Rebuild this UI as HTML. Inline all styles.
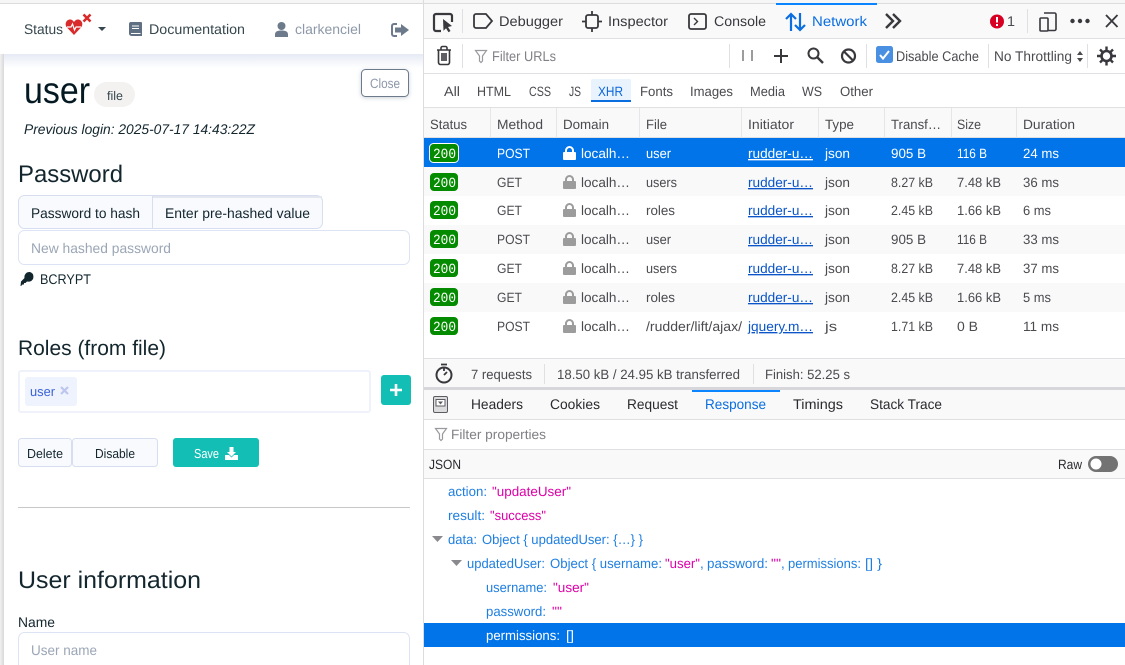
<!DOCTYPE html>
<html><head><meta charset="utf-8"><title>user</title>
<style>
html,body{margin:0;padding:0;width:1125px;height:665px;overflow:hidden;background:#fff}
svg{display:block}
text{font-family:"Liberation Sans",sans-serif;font-size:13.5px;fill:#38383d;white-space:pre;text-rendering:geometricPrecision}
.l{font-size:14px;fill:#36474e}
.b{fill:#0a66d8}
.m{fill:#4a4a4f}
.k{fill:#1f7fe0}
.s{fill:#dd00a9}
.w{fill:#fff}
.u{text-decoration:underline;fill:#0a55c8}
.g{fill:#808086}
.st{font-family:"Liberation Mono",monospace;font-size:14px;fill:#fff}
</style></head><body>
<svg xmlns="http://www.w3.org/2000/svg" width="1125" height="665" viewBox="0 0 1125 665">
<defs>
<linearGradient id="sh" x1="0" y1="0" x2="0" y2="1"><stop offset="0" stop-color="#e6eaf5"/><stop offset="1" stop-color="#fff"/></linearGradient>
<linearGradient id="sl" x1="0" y1="0" x2="1" y2="0"><stop offset="0" stop-color="#f2f2f2"/><stop offset="1" stop-color="#d8d8d8"/></linearGradient>
<filter id="cs" x="-20%" y="-20%" width="140%" height="150%"><feDropShadow dx="0" dy="1" stdDeviation="2" flood-color="#6c7a8c" flood-opacity=".35"/></filter>
<path id="lock" d="M2 6V4.500a4.500 4.500 0 0 1 9 0V6h1a1 1 0 0 1 1 1v6a1 1 0 0 1-1 1H1a1 1 0 0 1-1-1V7a1 1 0 0 1 1-1zM4 6h5V4.500a2.500 2.500 0 0 0-5 0z"/>
<path id="fn" d="M.5.5h11L7.500 6v5L6 12.500 4.500 11V6z" fill="none" stroke="#9a9a9e" stroke-width="1.200"/>
</defs>

<!-- LEFT PAGE -->
<rect x="0" y="0" width="424" height="665" fill="#fff"/>
<rect x="0" y="0" width="424" height="3" fill="#f6f6f6"/>
<rect x="0" y="3" width="424" height="1" fill="#dcdcdc"/>
<rect x="0" y="54" width="4" height="611" fill="url(#sl)"/>
<rect x="4" y="54" width="419" height="14" fill="url(#sh)"/>
<rect x="423" y="0" width="1" height="665" fill="#dcdcde"/>

<text class="l" x="24" y="34" textLength="39" lengthAdjust="spacingAndGlyphs">Status</text>
<path d="M74 35l-7-7.500c-3-3.500-.5-8 3-8 2 0 3 1 4 2.500 1-1.500 2-2.500 4-2.500 3.500 0 6 4.500 3 8z" fill="#d92b2b"/>
<path d="M67 27h4l1.500-3 2 6 1.500-3h5" fill="none" stroke="#fff" stroke-width="1.200"/>
<path d="M83.500 14.500l7 7m0-7l-7 7" stroke="#d92b2b" stroke-width="2.600" fill="none"/>
<path d="M98 27h8l-4 4z" fill="#36474e"/>
<path d="M131 22h10a1 1 0 0 1 1 1v13h-10.500a2.500 2.500 0 0 1-2.500-2.500V24a2 2 0 0 1 2-2z" fill="#5f7083"/>
<path d="M131 33.500h9.500M132 26h7M132 28.500h7" stroke="#fff" stroke-width="1" fill="none"/>
<text class="l" x="149" y="34" textLength="96" lengthAdjust="spacingAndGlyphs">Documentation</text>
<circle cx="281.500" cy="26" r="4" fill="#6c7a8c"/><path d="M275 37v-2.500c0-3 2.500-4 6.500-4s6.500 1 6.500 4V37z" fill="#6c7a8c"/>
<text class="l" style="fill:#8d98a8" x="295" y="34" textLength="66" lengthAdjust="spacingAndGlyphs">clarkenciel</text>
<path d="M401 24l8 6-8 6v-3.500h-6v-5h6z" fill="#6c7a8c"/><path d="M397 24h-3a2 2 0 0 0-2 2v8a2 2 0 0 0 2 2h3" fill="none" stroke="#6c7a8c" stroke-width="2"/>

<text x="24" y="103" style="font-size:37px;fill:#041922" textLength="66" lengthAdjust="spacingAndGlyphs">user</text>
<rect x="94" y="82" width="41" height="25" rx="12.500" fill="#f3f2f1"/>
<text x="107" y="100" style="font-size:12.500px;fill:#36474e" textLength="16" lengthAdjust="spacingAndGlyphs">file</text>
<text x="24" y="134" style="font-size:14px;font-style:italic;fill:#13262e" textLength="231" lengthAdjust="spacingAndGlyphs">Previous login: 2025-07-17 14:43:22Z</text>
<rect x="361.500" y="69.500" width="47" height="27" rx="4" fill="#fff" stroke="#6c7a8c" filter="url(#cs)"/>
<text x="370" y="88" style="font-size:13.500px;fill:#8d98a8" textLength="30" lengthAdjust="spacingAndGlyphs">Close</text>

<text x="18" y="182" style="font-size:24px;fill:#13262e" textLength="105" lengthAdjust="spacingAndGlyphs">Password</text>
<rect x="18.500" y="195.500" width="304" height="33" rx="6" fill="#f8fafe" stroke="#d6deef"/>
<rect x="152" y="196" width="1" height="32" fill="#d6deef"/>
<rect x="153" y="196" width="169" height="2" fill="#e4e7ef"/>
<text class="l" style="fill:#13262e" x="31" y="218" textLength="109" lengthAdjust="spacingAndGlyphs">Password to hash</text>
<text class="l" style="fill:#13262e" x="165" y="218" textLength="145" lengthAdjust="spacingAndGlyphs">Enter pre-hashed value</text>
<rect x="18.500" y="230.500" width="391" height="34" rx="6" fill="#fff" stroke="#dbe3f4"/>
<text class="l" style="fill:#9ba6b6" x="31" y="253" textLength="140" lengthAdjust="spacingAndGlyphs">New hashed password</text>
<path d="M30 272a5 5 0 0 1 0 9.500c-1 .2-2 .2-3 0l-1.500 1.500h-1.500v1.500h-1.500l-1.500 1.500h-.5l.5-4.500 3.500-3.500a5 5 0 0 1 5.500-6z" fill="#13262e"/>
<text class="l" style="fill:#13262e" x="40" y="284" textLength="51" lengthAdjust="spacingAndGlyphs">BCRYPT</text>

<text x="18" y="355" style="font-size:21px;fill:#13262e" textLength="148" lengthAdjust="spacingAndGlyphs">Roles (from file)</text>
<rect x="19" y="371" width="351" height="41" rx="2" fill="#fff" stroke="#eff2fb" stroke-width="2"/>
<rect x="25" y="377" width="52" height="29" rx="3" fill="#eff3fd"/>
<text x="30" y="396" style="font-size:13px;fill:#3a62d6" textLength="25" lengthAdjust="spacingAndGlyphs">user</text>
<path d="M61 387l7 7m0-7l-7 7" stroke="#bcc6ee" stroke-width="2.200" fill="none"/>
<rect x="381" y="375" width="30" height="30" rx="3" fill="#13bfb5"/>
<path d="M396 384v12m-6-6h12" stroke="#fff" stroke-width="2.600" fill="none"/>

<rect x="18.500" y="438.500" width="53" height="28" rx="3" fill="#f8fafe" stroke="#d6deef"/>
<rect x="72.500" y="438.500" width="85" height="28" rx="3" fill="#f8fafe" stroke="#d6deef"/>
<text x="27" y="458" style="font-size:13px;fill:#13262e" textLength="36" lengthAdjust="spacingAndGlyphs">Delete</text>
<text x="95" y="458" style="font-size:13px;fill:#13262e" textLength="40" lengthAdjust="spacingAndGlyphs">Disable</text>
<rect x="173" y="438" width="86" height="29" rx="3" fill="#13bfb5"/>
<text x="194" y="458" class="w" style="font-size:13px" textLength="25" lengthAdjust="spacingAndGlyphs">Save</text>
<path d="M229.500 447h4v5h2.500l-4.500 4.500-4.500-4.500h2.500z" fill="#fff"/><path d="M225 455h4l2.500 2.500 2.500-2.500h4v5h-13z" fill="#fff"/>
<rect x="18" y="507" width="392" height="1" fill="#c8c8c8"/>
<text x="18" y="588" style="font-size:24px;fill:#13262e" textLength="183" lengthAdjust="spacingAndGlyphs">User information</text>
<text class="l" style="fill:#13262e" x="18" y="627" textLength="37" lengthAdjust="spacingAndGlyphs">Name</text>
<rect x="18.500" y="632.500" width="391" height="40" rx="6" fill="#fff" stroke="#dbe3f4"/>
<text class="l" style="fill:#9ba6b6" x="31" y="655" textLength="66" lengthAdjust="spacingAndGlyphs">User name</text>

<!-- DEVTOOLS -->
<rect x="424" y="0" width="701" height="665" fill="#fff"/>
<rect x="424" y="0" width="701" height="3" fill="#f6f6f6"/>
<rect x="424" y="3" width="701" height="1" fill="#dcdcde"/>
<rect x="424" y="4" width="701" height="34" fill="#f9f9fa"/>
<rect x="424" y="38" width="701" height="1" fill="#e0e0e2"/>
<rect x="424" y="73" width="701" height="1" fill="#e0e0e2"/>
<rect x="424" y="107" width="701" height="1" fill="#e0e0e2"/>
<rect x="776" y="3" width="101" height="2" fill="#0a84ff"/>
<rect x="462" y="9" width="1" height="24" fill="#e0e0e2"/>
<rect x="1027" y="9" width="1" height="24" fill="#e0e0e2"/>

<!-- toolbar icons -->
<path d="M441 31h-5a2 2 0 0 1-2-2V16a2 2 0 0 1 2-2h14a2 2 0 0 1 2 2v6" fill="none" stroke="#38383d" stroke-width="2.200"/>
<path d="M443 19l9 7-4 1 2.500 4-2 1.200-2.500-4-2.500 2.500z" fill="#38383d"/>
<path d="M476 14h10l6 7-6 7h-10a2 2 0 0 1-2-2V16a2 2 0 0 1 2-2z" fill="none" stroke="#38383d" stroke-width="1.800"/>
<text x="499" y="26" class="l" style="fill:#38383d" textLength="64" lengthAdjust="spacingAndGlyphs">Debugger</text>
<rect x="586" y="15" width="12" height="13" rx="2" fill="none" stroke="#38383d" stroke-width="1.800"/>
<path d="M592 11v4M592 28v4M582 21.500h4M598 21.500h4" stroke="#38383d" stroke-width="1.800"/>
<text x="608" y="26" class="l" style="fill:#38383d" textLength="60" lengthAdjust="spacingAndGlyphs">Inspector</text>
<rect x="689" y="14" width="17" height="15" rx="2" fill="none" stroke="#38383d" stroke-width="1.800"/>
<path d="M694 18l3.500 3.500L694 25" fill="none" stroke="#38383d" stroke-width="1.400"/>
<text x="714" y="26" class="l" style="fill:#38383d" textLength="52" lengthAdjust="spacingAndGlyphs">Console</text>
<path d="M791 31V14m-5 5l5-5 5 5M800 13v17m-5-5l5 5 5-5" fill="none" stroke="#0a6ee0" stroke-width="2.200"/>
<text x="812" y="26" class="l" style="fill:#0a6ee0" textLength="55" lengthAdjust="spacingAndGlyphs">Network</text>
<path d="M886 14l7 7-7 7M893 14l7 7-7 7" fill="none" stroke="#38383d" stroke-width="2.400"/>
<circle cx="997" cy="21.500" r="7" fill="#d70022"/><path d="M997 17v5.500M997 24v2" stroke="#fff" stroke-width="2"/>
<text x="1007" y="26" class="l" style="fill:#4a4a4f" textLength="8" lengthAdjust="spacingAndGlyphs">1</text>
<rect x="1040" y="18" width="8" height="13" rx="1" fill="none" stroke="#38383d" stroke-width="1.600"/>
<path d="M1044 13h10.500a1.500 1.500 0 0 1 1.500 1.500V29a1.500 1.500 0 0 1-1.500 1.500H1048" fill="none" stroke="#38383d" stroke-width="1.600"/>
<circle cx="1072.500" cy="21" r="2.200" fill="#38383d"/><circle cx="1080" cy="21" r="2.200" fill="#38383d"/><circle cx="1087.500" cy="21" r="2.200" fill="#38383d"/>
<path d="M1106 15l11.500 12m0-12L1106 27" stroke="#38383d" stroke-width="1.800" fill="none"/>

<!-- row 2 -->
<rect x="462" y="44" width="1" height="24" fill="#e0e0e2"/>
<rect x="729" y="44" width="1" height="24" fill="#e0e0e2"/>
<rect x="866" y="44" width="1" height="24" fill="#e0e0e2"/>
<rect x="988" y="44" width="1" height="24" fill="#e0e0e2"/>
<rect x="1087" y="44" width="1" height="24" fill="#e0e0e2"/>
<path d="M437 50h14M441 50v-2a1.500 1.500 0 0 1 1.500-1.500h3a1.500 1.500 0 0 1 1.500 1.500v2M438.500 50v12.500a2 2 0 0 0 2 2h7a2 2 0 0 0 2-2V50M442 53v8M444 53v8M446 53v8" fill="none" stroke="#38383d" stroke-width="1.600"/>
<use href="#fn" x="475" y="50"/>
<text x="492" y="61" class="g" style="font-size:14px" textLength="64" lengthAdjust="spacingAndGlyphs">Filter URLs</text>
<path d="M743 50v11M752 50v11" stroke="#38383d" stroke-width="1"/>
<path d="M781 49v14M774 56h14" stroke="#38383d" stroke-width="2"/>
<circle cx="813.500" cy="53.500" r="5" fill="none" stroke="#38383d" stroke-width="2"/><path d="M817 57l6 6" stroke="#38383d" stroke-width="2.400"/>
<circle cx="848.500" cy="56" r="6.500" fill="none" stroke="#38383d" stroke-width="2.200"/><path d="M844 51.500l9 9" stroke="#38383d" stroke-width="2.200"/>
<rect x="876" y="46" width="17" height="17" rx="2.500" fill="#4a90e2"/>
<path d="M880 55l3 3.500 6-7.500" fill="none" stroke="#fff" stroke-width="2"/>
<text class="m" x="896" y="61" style="font-size:14px" textLength="83" lengthAdjust="spacingAndGlyphs">Disable Cache</text>
<text class="m" x="994" y="61" style="font-size:14px" textLength="78" lengthAdjust="spacingAndGlyphs">No Throttling</text>
<path d="M1077 55l3-4 3 4zM1077 58l3 4 3-4z" fill="#4a4a4f"/>
<circle cx="1106.500" cy="56" r="5" fill="none" stroke="#38383d" stroke-width="2.600"/>
<path d="M1106.500 46.500v4M1106.500 61.500v4M1097 56h4M1112 56h4M1100 49.500l3 3M1110 59.500l3 3M1113 49.500l-3 3M1103 59.500l-3 3" stroke="#38383d" stroke-width="2.400"/>

<!-- filter row -->
<rect x="591" y="79" width="40" height="22" rx="2" fill="#e9f3fe"/>
<rect x="591" y="100" width="40" height="2" fill="#0a6ee0"/>
<text class="m" x="444" y="96" textLength="16" lengthAdjust="spacingAndGlyphs">All</text>
<text class="m" x="477" y="96" textLength="34" lengthAdjust="spacingAndGlyphs">HTML</text>
<text class="m" x="529" y="96" textLength="22" lengthAdjust="spacingAndGlyphs">CSS</text>
<text class="m" x="569" y="96" textLength="12" lengthAdjust="spacingAndGlyphs">JS</text>
<text class="b" x="598" y="96" textLength="25" lengthAdjust="spacingAndGlyphs">XHR</text>
<text class="m" x="640" y="96" textLength="33" lengthAdjust="spacingAndGlyphs">Fonts</text>
<text class="m" x="690" y="96" textLength="43" lengthAdjust="spacingAndGlyphs">Images</text>
<text class="m" x="750" y="96" textLength="35" lengthAdjust="spacingAndGlyphs">Media</text>
<text class="m" x="802" y="96" textLength="20" lengthAdjust="spacingAndGlyphs">WS</text>
<text class="m" x="840" y="96" textLength="33" lengthAdjust="spacingAndGlyphs">Other</text>

<!-- table header -->
<rect x="424" y="108" width="701" height="30" fill="#f9f9fa"/>
<rect x="424" y="137" width="701" height="1" fill="#e0e0e2"/>
<g fill="#e6e6e8">
<rect x="490" y="108" width="1" height="30"/><rect x="556" y="108" width="1" height="30"/><rect x="639" y="108" width="1" height="30"/><rect x="741" y="108" width="1" height="30"/><rect x="818" y="108" width="1" height="30"/><rect x="884" y="108" width="1" height="30"/><rect x="951" y="108" width="1" height="30"/><rect x="1016" y="108" width="1" height="30"/>
</g>
<text class="m" x="430" y="129" textLength="37" lengthAdjust="spacingAndGlyphs">Status</text>
<text class="m" x="497" y="129" textLength="46" lengthAdjust="spacingAndGlyphs">Method</text>
<text class="m" x="563" y="129" textLength="46" lengthAdjust="spacingAndGlyphs">Domain</text>
<text class="m" x="646" y="129" textLength="21" lengthAdjust="spacingAndGlyphs">File</text>
<text class="m" x="748" y="129" textLength="46" lengthAdjust="spacingAndGlyphs">Initiator</text>
<text class="m" x="825" y="129" textLength="29" lengthAdjust="spacingAndGlyphs">Type</text>
<text class="m" x="891" y="129" textLength="50" lengthAdjust="spacingAndGlyphs">Transf…</text>
<text class="m" x="957" y="129" textLength="24" lengthAdjust="spacingAndGlyphs">Size</text>
<text class="m" x="1023" y="129" textLength="52" lengthAdjust="spacingAndGlyphs">Duration</text>

<!-- rows -->
<rect x="424" y="138" width="701" height="29" fill="#0074e8"/>
<rect x="424" y="167" width="701" height="29" fill="#f9f9fa"/>
<rect x="424" y="225" width="701" height="29" fill="#f9f9fa"/>
<rect x="424" y="283" width="701" height="29" fill="#f9f9fa"/>

<!-- row 1 -->
<rect x="429.500" y="143.500" width="29" height="19" rx="4" fill="#058b00" stroke="#fff"/>
<text class="st" x="433" y="158" textLength="23" lengthAdjust="spacingAndGlyphs">200</text>
<text class="w" x="497" y="158" textLength="33" lengthAdjust="spacingAndGlyphs">POST</text>
<use href="#lock" x="563" y="146" fill="#fff"/>
<text class="w" x="581" y="158" textLength="49" lengthAdjust="spacingAndGlyphs">localh…</text>
<text class="w" x="646" y="158" textLength="25" lengthAdjust="spacingAndGlyphs">user</text>
<text class="w" style="text-decoration:underline" x="748" y="158" textLength="65" lengthAdjust="spacingAndGlyphs">rudder-u…</text>
<text class="w" x="825" y="158" textLength="25" lengthAdjust="spacingAndGlyphs">json</text>
<text class="w" x="891" y="158" textLength="35" lengthAdjust="spacingAndGlyphs">905 B</text>
<text class="w" x="957" y="158" textLength="30" lengthAdjust="spacingAndGlyphs">116 B</text>
<text class="w" x="1023" y="158" textLength="36" lengthAdjust="spacingAndGlyphs">24 ms</text>

<!-- row 2 -->
<rect x="430" y="173" width="28" height="18" rx="4" fill="#058b00"/>
<text class="st" x="433" y="187" textLength="23" lengthAdjust="spacingAndGlyphs">200</text>
<text class="m" x="497" y="187" textLength="25" lengthAdjust="spacingAndGlyphs">GET</text>
<use href="#lock" x="563" y="175" fill="#9c9c9c"/>
<text class="m" x="581" y="187" textLength="49" lengthAdjust="spacingAndGlyphs">localh…</text>
<text class="m" x="646" y="187" textLength="31" lengthAdjust="spacingAndGlyphs">users</text>
<text class="u" x="748" y="187" textLength="65" lengthAdjust="spacingAndGlyphs">rudder-u…</text>
<text class="m" x="825" y="187" textLength="25" lengthAdjust="spacingAndGlyphs">json</text>
<text class="m" x="891" y="187" textLength="42" lengthAdjust="spacingAndGlyphs">8.27 kB</text>
<text class="m" x="957" y="187" textLength="44" lengthAdjust="spacingAndGlyphs">7.48 kB</text>
<text class="m" x="1023" y="187" textLength="36" lengthAdjust="spacingAndGlyphs">36 ms</text>

<!-- row 3 -->
<rect x="430" y="201" width="28" height="18" rx="4" fill="#058b00"/>
<text class="st" x="433" y="215" textLength="23" lengthAdjust="spacingAndGlyphs">200</text>
<text class="m" x="497" y="215" textLength="25" lengthAdjust="spacingAndGlyphs">GET</text>
<use href="#lock" x="563" y="203" fill="#9c9c9c"/>
<text class="m" x="581" y="215" textLength="49" lengthAdjust="spacingAndGlyphs">localh…</text>
<text class="m" x="646" y="215" textLength="29" lengthAdjust="spacingAndGlyphs">roles</text>
<text class="u" x="748" y="215" textLength="65" lengthAdjust="spacingAndGlyphs">rudder-u…</text>
<text class="m" x="825" y="215" textLength="25" lengthAdjust="spacingAndGlyphs">json</text>
<text class="m" x="891" y="215" textLength="42" lengthAdjust="spacingAndGlyphs">2.45 kB</text>
<text class="m" x="957" y="215" textLength="44" lengthAdjust="spacingAndGlyphs">1.66 kB</text>
<text class="m" x="1023" y="215" textLength="28" lengthAdjust="spacingAndGlyphs">6 ms</text>

<!-- row 4 -->
<rect x="430" y="230" width="28" height="18" rx="4" fill="#058b00"/>
<text class="st" x="433" y="244" textLength="23" lengthAdjust="spacingAndGlyphs">200</text>
<text class="m" x="497" y="244" textLength="33" lengthAdjust="spacingAndGlyphs">POST</text>
<use href="#lock" x="563" y="232" fill="#9c9c9c"/>
<text class="m" x="581" y="244" textLength="49" lengthAdjust="spacingAndGlyphs">localh…</text>
<text class="m" x="646" y="244" textLength="25" lengthAdjust="spacingAndGlyphs">user</text>
<text class="u" x="748" y="244" textLength="65" lengthAdjust="spacingAndGlyphs">rudder-u…</text>
<text class="m" x="825" y="244" textLength="25" lengthAdjust="spacingAndGlyphs">json</text>
<text class="m" x="891" y="244" textLength="35" lengthAdjust="spacingAndGlyphs">905 B</text>
<text class="m" x="957" y="244" textLength="30" lengthAdjust="spacingAndGlyphs">116 B</text>
<text class="m" x="1023" y="244" textLength="36" lengthAdjust="spacingAndGlyphs">33 ms</text>

<!-- row 5 -->
<rect x="430" y="259" width="28" height="18" rx="4" fill="#058b00"/>
<text class="st" x="433" y="273" textLength="23" lengthAdjust="spacingAndGlyphs">200</text>
<text class="m" x="497" y="273" textLength="25" lengthAdjust="spacingAndGlyphs">GET</text>
<use href="#lock" x="563" y="261" fill="#9c9c9c"/>
<text class="m" x="581" y="273" textLength="49" lengthAdjust="spacingAndGlyphs">localh…</text>
<text class="m" x="646" y="273" textLength="31" lengthAdjust="spacingAndGlyphs">users</text>
<text class="u" x="748" y="273" textLength="65" lengthAdjust="spacingAndGlyphs">rudder-u…</text>
<text class="m" x="825" y="273" textLength="25" lengthAdjust="spacingAndGlyphs">json</text>
<text class="m" x="891" y="273" textLength="42" lengthAdjust="spacingAndGlyphs">8.27 kB</text>
<text class="m" x="957" y="273" textLength="44" lengthAdjust="spacingAndGlyphs">7.48 kB</text>
<text class="m" x="1023" y="273" textLength="36" lengthAdjust="spacingAndGlyphs">37 ms</text>

<!-- row 6 -->
<rect x="430" y="288" width="28" height="18" rx="4" fill="#058b00"/>
<text class="st" x="433" y="302" textLength="23" lengthAdjust="spacingAndGlyphs">200</text>
<text class="m" x="497" y="302" textLength="25" lengthAdjust="spacingAndGlyphs">GET</text>
<use href="#lock" x="563" y="290" fill="#9c9c9c"/>
<text class="m" x="581" y="302" textLength="49" lengthAdjust="spacingAndGlyphs">localh…</text>
<text class="m" x="646" y="302" textLength="29" lengthAdjust="spacingAndGlyphs">roles</text>
<text class="u" x="748" y="302" textLength="65" lengthAdjust="spacingAndGlyphs">rudder-u…</text>
<text class="m" x="825" y="302" textLength="25" lengthAdjust="spacingAndGlyphs">json</text>
<text class="m" x="891" y="302" textLength="42" lengthAdjust="spacingAndGlyphs">2.45 kB</text>
<text class="m" x="957" y="302" textLength="44" lengthAdjust="spacingAndGlyphs">1.66 kB</text>
<text class="m" x="1023" y="302" textLength="28" lengthAdjust="spacingAndGlyphs">5 ms</text>

<!-- row 7 -->
<rect x="430" y="317" width="28" height="18" rx="4" fill="#058b00"/>
<text class="st" x="433" y="331" textLength="23" lengthAdjust="spacingAndGlyphs">200</text>
<text class="m" x="497" y="331" textLength="33" lengthAdjust="spacingAndGlyphs">POST</text>
<use href="#lock" x="563" y="319" fill="#9c9c9c"/>
<text class="m" x="581" y="331" textLength="49" lengthAdjust="spacingAndGlyphs">localh…</text>
<text class="m" x="646" y="331" textLength="96" lengthAdjust="spacingAndGlyphs">/rudder/lift/ajax/</text>
<text class="u" x="748" y="331" textLength="65" lengthAdjust="spacingAndGlyphs">jquery.m…</text>
<text class="m" x="825" y="331" textLength="12" lengthAdjust="spacingAndGlyphs">js</text>
<text class="m" x="891" y="331" textLength="42" lengthAdjust="spacingAndGlyphs">1.71 kB</text>
<text class="m" x="957" y="331" textLength="21" lengthAdjust="spacingAndGlyphs">0 B</text>
<text class="m" x="1023" y="331" textLength="36" lengthAdjust="spacingAndGlyphs">11 ms</text>

<!-- status bar -->
<rect x="424" y="358" width="701" height="1" fill="#e0e0e2"/>
<rect x="424" y="359" width="701" height="28" fill="#f9f9fa"/>
<circle cx="444" cy="375" r="7.500" fill="none" stroke="#38383d" stroke-width="2"/>
<path d="M441 364.500h6M444 371v-4M444 375l3-3" stroke="#38383d" stroke-width="1.800" fill="none"/>
<text class="m" x="471" y="379" textLength="61" lengthAdjust="spacingAndGlyphs">7 requests</text>
<rect x="544" y="364" width="1" height="20" fill="#e0e0e2"/>
<text class="m" x="557" y="379" textLength="183" lengthAdjust="spacingAndGlyphs">18.50 kB / 24.95 kB transferred</text>
<rect x="753" y="364" width="1" height="20" fill="#e0e0e2"/>
<text class="m" x="765" y="379" textLength="85" lengthAdjust="spacingAndGlyphs">Finish: 52.25 s</text>

<!-- detail tabs -->
<rect x="424" y="387" width="701" height="3" fill="#d7d7db"/>
<rect x="424" y="390" width="701" height="29" fill="#f9f9fa"/>
<rect x="424" y="419" width="701" height="1" fill="#e0e0e2"/>
<rect x="692" y="390" width="88" height="2" fill="#0a84ff"/>
<rect x="433.500" y="396.500" width="14" height="16" rx="1.500" fill="#dcdcde" stroke="#5c5c60"/>
<path d="M436 399.500h9v6.500h-9z" fill="#fff" stroke="#5c5c60"/><path d="M438 401.500h5l-2.500 3z" fill="#5c5c60"/>
<text x="471" y="409" style="font-size:14px;fill:#2a2a2e" textLength="52" lengthAdjust="spacingAndGlyphs">Headers</text>
<text x="550" y="409" style="font-size:14px;fill:#2a2a2e" textLength="50" lengthAdjust="spacingAndGlyphs">Cookies</text>
<text x="627" y="409" style="font-size:14px;fill:#2a2a2e" textLength="51" lengthAdjust="spacingAndGlyphs">Request</text>
<text x="705" y="409" style="font-size:14px;fill:#0a6ee0" textLength="61" lengthAdjust="spacingAndGlyphs">Response</text>
<text x="793" y="409" style="font-size:14px;fill:#2a2a2e" textLength="50" lengthAdjust="spacingAndGlyphs">Timings</text>
<text x="870" y="409" style="font-size:14px;fill:#2a2a2e" textLength="72" lengthAdjust="spacingAndGlyphs">Stack Trace</text>

<!-- filter properties -->
<use href="#fn" x="435" y="428"/>
<text class="g" x="451" y="439" textLength="95" lengthAdjust="spacingAndGlyphs">Filter properties</text>
<rect x="424" y="449" width="701" height="1" fill="#e0e0e2"/>
<rect x="424" y="450" width="701" height="28" fill="#f9f9fa"/>
<rect x="424" y="478" width="701" height="1" fill="#e0e0e2"/>
<text x="429" y="469" style="fill:#2a2a2e" textLength="32" lengthAdjust="spacingAndGlyphs">JSON</text>
<text x="1058" y="469" style="fill:#2a2a2e" textLength="24" lengthAdjust="spacingAndGlyphs">Raw</text>
<rect x="1088" y="456" width="30" height="16" rx="8" fill="#737373"/>
<circle cx="1096" cy="464" r="5.500" fill="#fff"/>

<!-- JSON tree -->
<text class="k" x="448" y="496" textLength="39" lengthAdjust="spacingAndGlyphs">action:</text>
<text class="s" x="492" y="496" textLength="79" lengthAdjust="spacingAndGlyphs">"updateUser"</text>
<text class="k" x="448" y="520" textLength="37" lengthAdjust="spacingAndGlyphs">result:</text>
<text class="s" x="490" y="520" textLength="56" lengthAdjust="spacingAndGlyphs">"success"</text>
<path d="M432 536h11l-5.500 6z" fill="#8a8a8e"/>
<text class="k" x="448" y="544" textLength="29" lengthAdjust="spacingAndGlyphs">data:</text>
<text class="k" x="482" y="544" textLength="161" lengthAdjust="spacingAndGlyphs">Object { updatedUser: {…} }</text>
<path d="M451 560h11l-5.500 6z" fill="#8a8a8e"/>
<text class="k" x="467" y="568" textLength="78" lengthAdjust="spacingAndGlyphs">updatedUser:</text>
<text class="k" x="550" y="568" textLength="112" lengthAdjust="spacingAndGlyphs">Object { username:</text>
<text class="s" x="665" y="568" textLength="35" lengthAdjust="spacingAndGlyphs">"user"</text>
<text class="k" x="700" y="568">,</text>
<text class="k" x="707" y="568" textLength="61" lengthAdjust="spacingAndGlyphs">password:</text>
<text class="s" x="771" y="568" textLength="10" lengthAdjust="spacingAndGlyphs">""</text>
<text class="k" x="781" y="568">,</text>
<text class="k" x="788" y="568" textLength="73" lengthAdjust="spacingAndGlyphs">permissions:</text>
<text class="k" x="865" y="568" textLength="17" lengthAdjust="spacingAndGlyphs">[] }</text>
<text class="k" x="486" y="592" textLength="61" lengthAdjust="spacingAndGlyphs">username:</text>
<text class="s" x="553" y="592" textLength="36" lengthAdjust="spacingAndGlyphs">"user"</text>
<text class="k" x="486" y="616" textLength="60" lengthAdjust="spacingAndGlyphs">password:</text>
<text class="s" x="552" y="616" textLength="10" lengthAdjust="spacingAndGlyphs">""</text>
<rect x="424" y="623" width="701" height="24" fill="#0074e8"/>
<text class="w" x="486" y="640" textLength="74" lengthAdjust="spacingAndGlyphs">permissions:</text>
<text class="w" x="566" y="640" textLength="8" lengthAdjust="spacingAndGlyphs">[]</text>
</svg>
</body></html>
